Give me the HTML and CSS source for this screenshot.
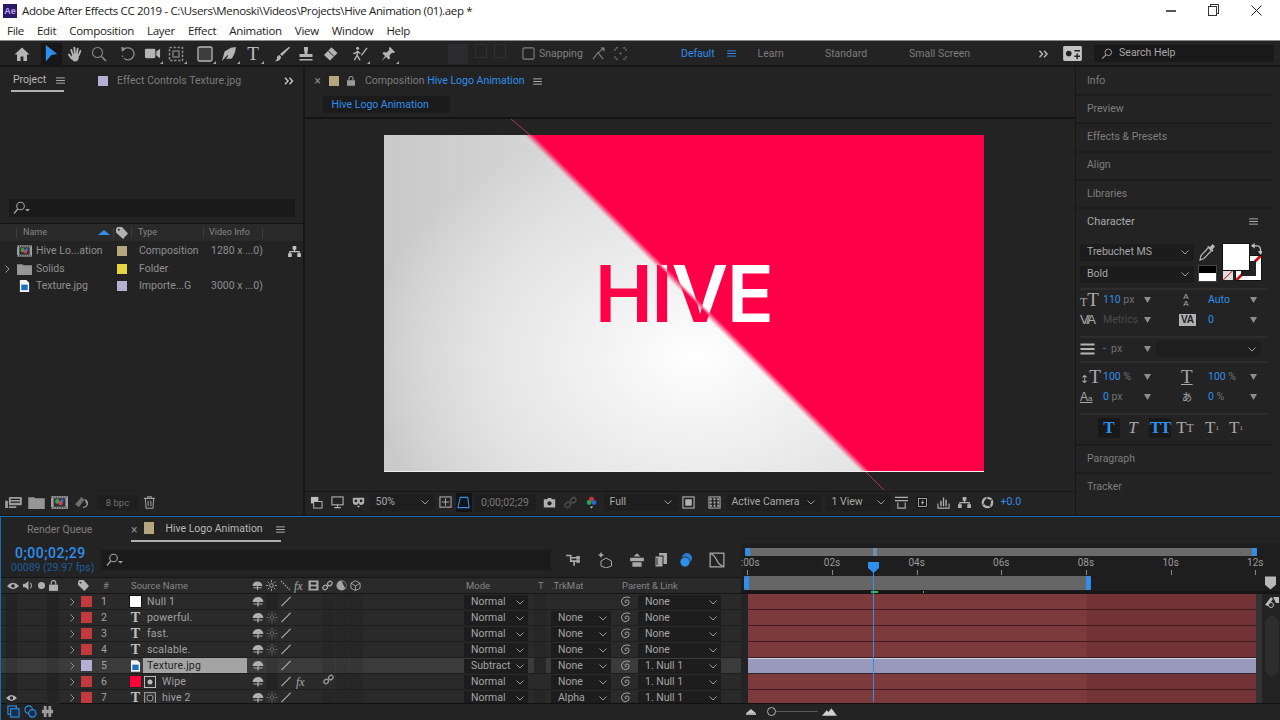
FILE: index.html
```html
<!DOCTYPE html>
<html lang="en">
<head>
<meta charset="utf-8">
<title>Adobe After Effects CC 2019</title>
<link rel="stylesheet" href="styles.css">
</head>
<body>
<svg class="sprite" aria-hidden="true">
  <symbol id="home" viewBox="0 0 16 16"><path fill="currentColor" d="M8 1.5 0.5 8.5H3V15H6.6V10.5H9.4V15H13V8.5H15.5Z"/></symbol>
  <symbol id="arrow" viewBox="0 0 16 18"><path fill="#2f8fec" d="M2 0 14 9.5 8 10.5 2 17.5Z"/></symbol>
  <symbol id="hand" viewBox="0 0 16 16"><path fill="none" stroke="currentColor" stroke-width="1.9" stroke-linecap="round" d="M4.2 4 6 9M7.3 1.8 8 8.5M10.6 2.7 9.8 8.5M13.4 5 11.6 9.5M2 8.6 4.6 12.4"/><path fill="currentColor" d="M5 8H12L11.5 13Q10.5 15.5 8 15.5 6 15.5 4.3 12.5Z"/></symbol>
  <symbol id="zoom" viewBox="0 0 16 16"><circle cx="6.5" cy="6.5" r="5" fill="none" stroke="currentColor" stroke-width="1.1"/><path stroke="currentColor" stroke-width="1.6" d="M10.5 10.5 15 15"/></symbol>
  <symbol id="rot" viewBox="0 0 16 16"><path fill="none" stroke="currentColor" stroke-width="1.3" d="M3 4.5A6 6 0 1 1 5 13"/><path fill="none" stroke="currentColor" stroke-width="1.1" stroke-dasharray="1.5 1.5" d="M5 13A6 6 0 0 1 2 8"/><path fill="currentColor" d="M1 1 6 2 2 6Z"/></symbol>
  <symbol id="cam" viewBox="0 0 18 14"><rect x="1" y="2" width="11" height="10" rx="1.5" fill="currentColor"/><path fill="currentColor" d="M13 5 17 2V12L13 9Z"/></symbol>
  <symbol id="pan" viewBox="0 0 16 16"><rect x="1.5" y="1.5" width="13" height="13" fill="none" stroke="currentColor" stroke-width="1.5" stroke-dasharray="2.4 1.6"/><rect x="5" y="5" width="6" height="6" fill="none" stroke="currentColor" stroke-width="1.2"/></symbol>
  <symbol id="rect" viewBox="0 0 16 16"><rect x="1" y="1" width="14" height="14" rx="1.5" fill="#3d3d3d" stroke="#b5b5b5" stroke-width="1.3"/></symbol>
  <symbol id="pen" viewBox="0 0 16 16"><path fill="currentColor" d="M15 1 9.8 1.8 3.6 5.5 1 15 6.500 9 7.200 9.800 5 13 11 12.500 14 6.300Z"/></symbol>
  <symbol id="brush" viewBox="0 0 16 16"><path fill="currentColor" d="M15 .7 16 1.7 8 10 6 8ZM5.2 9 7.2 11Q6.5 15 .5 15.5 3.5 13.5 3 11 3.5 9.3 5.2 9Z"/></symbol>
  <symbol id="stamp" viewBox="0 0 16 16"><path fill="currentColor" d="M6 1H10V3.5L9.3 8H14.5V11H1.5V8H6.7L6 3.5ZM1.5 13H14.5V14.5H1.5Z"/></symbol>
  <symbol id="eraser" viewBox="0 0 16 16"><path fill="currentColor" d="M9.5 1.2 15.5 7 8 14.5 2 9Z"/><path fill="#232323" d="M6 5 11.5 10.5 12 10 6.5 4.5Z"/></symbol>
  <symbol id="puppet" viewBox="0 0 18 16"><circle cx="7" cy="2.5" r="1.6" fill="currentColor"/><path fill="none" stroke="currentColor" stroke-width="1.5" d="M7 5 6.5 10 3.5 15M6.5 10 9.5 15M7 6 2.5 8.5M7 6 10 8"/><path stroke="currentColor" stroke-width="1.4" d="M17 2 11 10"/></symbol>
  <symbol id="pin" viewBox="0 0 16 16"><path fill="currentColor" d="M9.8 .8 15.2 6.2 13.5 7 12 6.8 9.5 9.5 10 12.5 8.6 13.5 2.5 7.4 3.6 6 6.5 6.5 9.2 4 9 2.5ZM5 10 6 11 1.5 15Z"/></symbol>
  <symbol id="check" viewBox="0 0 14 14"><rect x="1" y="1" width="12" height="12" rx="1.5" fill="none" stroke="currentColor" stroke-width="1.2"/></symbol>
  <symbol id="snap1" viewBox="0 0 14 14"><path fill="none" stroke="currentColor" stroke-width="1.1" d="M1 13 6.5 6 12 13M7 6 12.5 1"/><path fill="currentColor" d="M9 0.5H13.5V5Z"/></symbol>
  <symbol id="snap2" viewBox="0 0 14 14"><path fill="none" stroke="currentColor" stroke-width="1.2" stroke-dasharray="2 2" d="M1 4V1H4M10 1H13V4M13 10V13H10M4 13H1V10"/><circle cx="7" cy="7" r="1" fill="currentColor"/></symbol>
  <symbol id="ham" viewBox="0 0 10 8"><path stroke="currentColor" stroke-width="1.1" d="M0 1H10M0 4H10M0 7H10"/></symbol>
  <symbol id="more" viewBox="0 0 10 8"><path fill="none" stroke="currentColor" stroke-width="1.5" d="M1 .8 4 4 1 7.2M5.5 .8 8.5 4 5.5 7.2"/></symbol>
  <symbol id="work" viewBox="0 0 20 16"><rect width="20" height="16" rx="1.5" fill="#c4c4c4"/><circle cx="6" cy="8" r="3" fill="#222"/><path stroke="#222" stroke-width="1.5" d="M12 5H18M12 11H18M15 8V14"/></symbol>
  <symbol id="find" viewBox="0 0 14 14"><circle cx="8.5" cy="5" r="3.8" fill="none" stroke="currentColor" stroke-width="1.1"/><path stroke="currentColor" stroke-width="1.3" d="M5.7 8 1.5 12.5"/></symbol>
  <symbol id="find2" viewBox="0 0 18 14"><circle cx="7.5" cy="5" r="3.8" fill="none" stroke="currentColor" stroke-width="1.1"/><path stroke="currentColor" stroke-width="1.3" d="M4.7 8 1 12.5"/><path fill="currentColor" d="M12 8H17L14.5 10.5Z"/></symbol>
  <symbol id="sort" viewBox="0 0 12 5"><path fill="#2f8fec" d="M0 5 6 0 12 5Z"/></symbol>
  <symbol id="tag" viewBox="0 0 12 12"><path fill="#b2b2b2" d="M0 1.5 1.5 0H6L12 6.5 7 12 0 5.5Z"/><circle cx="2.8" cy="2.8" r="1" fill="#2a2a2a"/></symbol>
  <symbol id="comp" viewBox="0 0 16 12"><rect width="16" height="12" fill="#9e9e9e"/><rect x="2.5" y="2" width="11" height="8" fill="#2d2f3c"/><circle cx="6" cy="5" r="2.2" fill="#3fa34d"/><circle cx="9" cy="6.5" r="2.2" fill="#d84040"/><circle cx="10.5" cy="4.5" r="1.4" fill="#3f6fd8"/><path stroke="#222" stroke-dasharray="1 1.3" d="M0 1H16M0 11H16"/></symbol>
  <symbol id="folder" viewBox="0 0 14 11"><path fill="#969696" d="M0 1H5L6 2H14V11H0Z"/></symbol>
  <symbol id="file" viewBox="0 0 10 13"><path fill="#f2f2f2" d="M0 0H7L10 3V13H0Z"/><rect x="1.5" y="5" width="7" height="6" fill="#1f6fc4"/></symbol>
  <symbol id="flow" viewBox="0 0 14 12"><path fill="currentColor" d="M5 0H9V4H7.7V5.5H12.7V8H14V12H10V8H11.4V6.7H2.6V8H4V12H0V8H1.3V5.5H6.3V4H5Z"/></symbol>
  <symbol id="render" viewBox="0 0 18 14"><rect x="4" y="1" width="14" height="9" rx="1" fill="#9c9c9c"/><rect x="6" y="3" width="10" height="1.3" fill="#222"/><rect x="6" y="6" width="10" height="1.3" fill="#222"/><path fill="#9c9c9c" d="M0 5H3V13H0ZM4 11H12V13H4Z"/></symbol>
  <symbol id="interp" viewBox="0 0 18 14"><path fill="#6e6e6e" d="M1 9 8 1 11 4 5 12Z"/><path fill="none" stroke="#a8a8a8" stroke-width="1.2" d="M11 4A4 4 0 1 1 9.5 12"/><path stroke="#a8a8a8" stroke-width="1.2" d="M13 4V8"/></symbol>
  <symbol id="trash" viewBox="0 0 12 14"><path fill="none" stroke="currentColor" stroke-width="1.1" d="M0 2.5H12M4 2.5V.7H8V2.5M1.5 2.5 2.2 13.3H9.8L10.5 2.5M4.5 5V11M7.5 5V11"/></symbol>
  <symbol id="layers" viewBox="0 0 14 14"><rect x="1" y="1" width="8" height="7" fill="#bdbdbd"/><rect x="4" y="6" width="9" height="7" fill="#232323" stroke="#bdbdbd"/></symbol>
  <symbol id="monitor" viewBox="0 0 14 14"><rect x="1" y="1" width="12" height="8.5" fill="none" stroke="currentColor" stroke-width="1.2"/><path stroke="currentColor" stroke-width="1.2" d="M7 9.5V12M3.5 12.5H10.5"/></symbol>
  <symbol id="mask" viewBox="0 0 16 14"><path fill="currentColor" d="M1 1H15V6Q15 10 11 10 9 10 8 7.5 7 10 5 10 1 10 1 6Z"/><circle cx="4.8" cy="5" r="1.7" fill="#232323"/><circle cx="11.2" cy="5" r="1.7" fill="#232323"/><path d="M6 11H10L8 13.5Z" fill="currentColor"/></symbol>
  <symbol id="grid" viewBox="0 0 14 14"><rect x="1" y="1" width="12" height="11" fill="none" stroke="currentColor" stroke-width="1.1"/><path stroke="currentColor" d="M7 2.5V10.5M3 6.5H11"/></symbol>
  <symbol id="mbox" viewBox="0 0 14 14"><path fill="none" stroke="#2f8fec" stroke-width="1.2" d="M3.5 1.5H11.5L13 12.5H1Z"/></symbol>
  <symbol id="camera" viewBox="0 0 16 13"><path fill="currentColor" d="M1 2.5H5L6 1H10L11 2.5H15V12.5H1Z"/><circle cx="8" cy="7.5" r="2.6" fill="#232323"/></symbol>
  <symbol id="link" viewBox="0 0 14 14"><g fill="none" stroke="currentColor" stroke-width="1.6"><rect x="1" y="7" width="6" height="5" rx="2.5" transform="rotate(-45 4 9.5)"/><rect x="7" y="2" width="6" height="5" rx="2.5" transform="rotate(-45 10 4.5)"/></g></symbol>
  <symbol id="rgb" viewBox="0 0 14 16"><circle cx="7" cy="4" r="3" fill="#d8312b"/><circle cx="4" cy="8" r="3" fill="#27a54a"/><circle cx="10" cy="8" r="3" fill="#2d63d6"/><path d="M5 13H9L7 15.5Z" fill="#ccc"/></symbol>
  <symbol id="regions" viewBox="0 0 14 14"><rect x="1" y="1" width="12" height="12" fill="none" stroke="currentColor" stroke-width="1.2"/><rect x="3.5" y="3.5" width="7" height="7" fill="currentColor"/></symbol>
  <symbol id="alpha" viewBox="0 0 14 14"><rect x="1" y="1" width="12" height="12" fill="none" stroke="currentColor" stroke-width="1.1"/><path fill="none" stroke="currentColor" stroke-width="2" stroke-dasharray="2 2" d="M2 3.5H12M2 7H12M2 10.5H12"/></symbol>
  <symbol id="axis" viewBox="0 0 14 14"><path fill="none" stroke="currentColor" stroke-width="1.2" d="M0 1.5H14M0 5H14M3 7V13H11V7"/></symbol>
  <symbol id="fast" viewBox="0 0 16 16"><rect x="1" y="1" width="14" height="14" fill="#151515"/><rect x="3" y="3" width="10" height="10" fill="none" stroke="#c0c0c0"/><path fill="#c0c0c0" d="M9 4 6 9H8L7 12 10 7H8Z"/></symbol>
  <symbol id="chart" viewBox="0 0 14 14"><path fill="none" stroke="currentColor" stroke-width="1.2" d="M1 8V13H13V8"/><path fill="currentColor" d="M3.5 5H5V11H3.5ZM6.3 1.5H7.7V11H6.3ZM9 4H10.5V11H9Z"/></symbol>
  <symbol id="shutter" viewBox="0 0 14 14"><circle cx="7" cy="7" r="5" fill="none" stroke="currentColor" stroke-width="2.6"/><path stroke="#232323" d="M7 1 4 7M12 4 7 7M10 12 8 7M2 9 7 7"/></symbol>
  <symbol id="comp-mini" viewBox="0 0 14 12"><path fill="none" stroke="currentColor" stroke-width="1.4" d="M1 2H5V7H12M8 7V11M5 4H12"/><rect x="10" y="2.5" width="3" height="3" fill="currentColor"/><rect x="10" y="5.5" width="3" height="3" fill="currentColor"/></symbol>
  <symbol id="draft" viewBox="0 0 16 16"><path fill="currentColor" d="M4 0 5 2 7 3 5 4 4 6 3 4 1 3 3 2Z"/><path fill="none" stroke="currentColor" d="M9 6 14.5 9V14L9 16 4 14V9Z"/></symbol>
  <symbol id="shy2" viewBox="0 0 14 14"><path fill="currentColor" d="M7 1 10 4H4ZM1 5H13V8H1ZM3 9H11V13H3Z"/></symbol>
  <symbol id="frames" viewBox="0 0 14 16"><rect x="5" y="1" width="8" height="11" fill="currentColor"/><rect x="1" y="4" width="8" height="11" fill="currentColor" stroke="#232323"/><path stroke="#232323" d="M3 6V13"/></symbol>
  <symbol id="blur" viewBox="0 0 14 16"><ellipse cx="8" cy="6" rx="5" ry="5" transform="rotate(30 8 6)" fill="#2a7cd4"/><ellipse cx="6" cy="10" rx="5" ry="5" transform="rotate(30 6 10)" fill="#2f8fec" stroke="#232323" stroke-width=".7"/></symbol>
  <symbol id="graph" viewBox="0 0 14 14"><rect x="1" y="1" width="12" height="12" fill="none" stroke="currentColor" stroke-width="1.1"/><path fill="none" stroke="currentColor" stroke-width="1.1" d="M2 2C7 2 6 12 12 12"/></symbol>
  <symbol id="eye" viewBox="0 0 12 8"><path fill="currentColor" d="M0 4Q6-2.5 12 4 6 10.5 0 4Z"/><circle cx="6" cy="4" r="1.8" fill="#262626"/></symbol>
  <symbol id="spk" viewBox="0 0 12 12"><path fill="currentColor" d="M0 4H2.5L6 1V11L2.5 8H0Z"/><path fill="none" stroke="currentColor" stroke-width="1.1" d="M8 3Q10.5 6 8 9"/></symbol>
  <symbol id="lock" viewBox="0 0 10 12"><path fill="none" stroke="currentColor" stroke-width="1.3" d="M2.5 5V3A2.5 2.5 0 0 1 7.5 3V5"/><rect y="5" width="10" height="7" fill="currentColor"/></symbol>
  <symbol id="shy" viewBox="0 0 12 10"><path fill="currentColor" d="M6 .5Q10.500 .5 11.500 5.500H.5Q1.500 .5 6 .5ZM1.500 7H10.500V8H1.500ZM5.400 5H6.600V10H5.400Z"/></symbol>
  <symbol id="sun" viewBox="0 0 12 12"><circle cx="6" cy="6" r="2" fill="none" stroke="currentColor"/><path stroke="currentColor" d="M6 0V2.5M6 9.500V12M0 6H2.500M9.500 6H12M1.800 1.800 3.500 3.500M8.500 8.500 10.200 10.200M1.800 10.200 3.500 8.500M8.500 3.500 10.200 1.800"/></symbol>
  <symbol id="slash" viewBox="0 0 12 12"><path stroke="currentColor" stroke-width="1.2" d="M1 11 11 1"/></symbol>
  <symbol id="dash" viewBox="0 0 12 12"><path stroke="currentColor" stroke-width="1.1" stroke-dasharray="2 1" d="M1 1 11 11"/></symbol>
  <symbol id="film" viewBox="0 0 12 12"><rect x=".5" y=".5" width="11" height="11" fill="#a4a4a4"/><rect x="3" y="2.500" width="6" height="2.500" fill="#222"/><rect x="3" y="7" width="6" height="2.500" fill="#222"/></symbol>
  <symbol id="half" viewBox="0 0 12 12"><circle cx="6" cy="6" r="5.500" fill="#a4a4a4"/><path fill="#2a2a2a" d="M6 1A5 5 0 0 1 10 9Z"/></symbol>
  <symbol id="cube" viewBox="0 0 12 12"><path fill="none" stroke="currentColor" d="M6 .7 11 3.500V9L6 11.500 1 9V3.500ZM1 3.500 6 6.500 11 3.500M6 6.500V11.500"/></symbol>
  <symbol id="spiral" viewBox="0 0 12 12"><path fill="none" stroke="currentColor" stroke-width="1" d="M6.500 6.500Q5 7 5 5.500 5.500 3.500 8 4 10 5.500 8.500 8.500 5 11 2.500 8.500 0 5 3 2.200 6 0 10 1.500"/></symbol>
  <symbol id="chev" viewBox="0 0 8 5"><path fill="none" stroke="currentColor" stroke-width="1" d="M.5 .5 4 4 7.500 .5"/></symbol>
  <symbol id="chevr" viewBox="0 0 5 8"><path fill="none" stroke="currentColor" stroke-width="1" d="M.5 .5 4 4 .5 7.500"/></symbol>
  <symbol id="caret" viewBox="0 0 7 6"><path fill="currentColor" d="M0 0H7L3.500 6Z"/></symbol>
  <symbol id="drop" viewBox="0 0 16 18"><path fill="none" stroke="#b4b4b4" stroke-width="1.2" d="M9 5 2 12.500 1 17 5 15.500 12 8"/><path fill="#b4b4b4" d="M8 4 10 6 13 9 14.500 7.500 13.500 6.500 16 3.500 13.500 1 11 4 9.500 3Z"/></symbol>
  <symbol id="swapi" viewBox="0 0 12 14"><path fill="none" stroke="#c4c4c4" stroke-width="1.400" d="M1 3H7Q10.500 3 10.500 9"/><path fill="#c4c4c4" d="M4 0V6L0 3ZM7.500 8.500H13L10.500 13Z"/></symbol>
  <symbol id="lines" viewBox="0 0 14 12"><path stroke="#b4b4b4" stroke-width="2" d="M0 1.500H14M0 6H14M0 10.500H14"/></symbol>
  <symbol id="slider-m" viewBox="0 0 16 8"><path fill="#d0d0d0" d="M0 8 5 2 7 4 10 0 16 8Z"/></symbol>
  <symbol id="slider-s" viewBox="0 0 12 8"><path fill="#c4c4c4" d="M0 6 6 1 12 6Z"/><rect y="6" width="12" height="2" fill="#c4c4c4"/></symbol>
  <symbol id="t1" viewBox="0 0 14 14"><rect x="1" y="1" width="9" height="9" fill="none" stroke="#2f8fec" stroke-width="1.200"/><rect x="4" y="4" width="9" height="9" fill="#14304a" stroke="#2f8fec" stroke-width="1.200"/></symbol>
  <symbol id="t2" viewBox="0 0 14 14"><circle cx="5" cy="5" r="4" fill="none" stroke="#2f8fec" stroke-width="1.200"/><circle cx="9" cy="9" r="4" fill="#14304a" stroke="#2f8fec" stroke-width="1.200"/></symbol>
  <symbol id="t3" viewBox="0 0 14 14"><path fill="#9c9c9c" d="M3 1H6V5H3ZM8 1H11V5H8ZM3 9H6V13H3ZM8 9H11V13H8ZM1 5H13V9H1Z"/></symbol>
  <symbol id="cap" viewBox="0 0 12 14"><path fill="#b9b9b9" d="M0 0H12V9L6 14 0 9Z"/></symbol>
  <symbol id="pens" viewBox="0 0 14 12"><path fill="#bcbcbc" d="M8 1H14V7H11ZM0 9 6 1 8 3 3 10Z"/><circle cx="6" cy="9" r="2.500" fill="#232323" stroke="#bcbcbc"/></symbol>
  <symbol id="wipe-mask" viewBox="0 0 12 12"><rect x=".5" y=".5" width="11" height="11" fill="none" stroke="#bbb"/><circle cx="6" cy="6" r="2.500" fill="#bbb"/></symbol>
  <symbol id="track-mask" viewBox="0 0 12 12"><rect x=".5" y=".5" width="11" height="11" fill="#3a3a3a" stroke="#999"/><circle cx="6" cy="6" r="3" fill="#232323" stroke="#999"/></symbol>
</svg>

<header class="titlebar">
  <span class="ae-logo">Ae</span>
  <span class="title-text">Adobe After Effects CC 2019 - C:\Users\Menoski\Videos\Projects\Hive Animation (01).aep *</span>
  <div class="winbtns">
    <span class="win-min"></span>
    <span class="win-max"></span>
    <svg class="win-close" viewBox="0 0 11 11"><path stroke="#222" d="M.5 .5 10.500 10.500M10.500 .5 .5 10.500"/></svg>
  </div>
</header>
<nav class="menubar">
  <span>File</span><span>Edit</span><span>Composition</span><span>Layer</span><span>Effect</span><span>Animation</span><span>View</span><span>Window</span><span>Help</span>
</nav>

<div class="toolbar">
  <div class="tgroup"><span class="ti"><svg class="i16"><use href="#home"/></svg></span></div>
  <div class="tgroup">
    <span class="ti ti-on"><svg class="i17"><use href="#arrow"/></svg></span>
    <span class="ti"><svg class="i16"><use href="#hand"/></svg></span>
    <span class="ti dim"><svg class="i16"><use href="#zoom"/></svg></span>
  </div>
  <div class="tgroup">
    <span class="ti dim"><svg class="i16"><use href="#rot"/></svg></span>
    <span class="ti tri"><svg class="i17"><use href="#cam"/></svg></span>
    <span class="ti dim tri"><svg class="i16"><use href="#pan"/></svg></span>
  </div>
  <div class="tgroup">
    <span class="ti tri"><svg class="i16"><use href="#rect"/></svg></span>
    <span class="ti tri"><svg class="i16"><use href="#pen"/></svg></span>
    <span class="ti t-glyph tri">T</span>
  </div>
  <div class="tgroup">
    <span class="ti"><svg class="i16"><use href="#brush"/></svg></span>
    <span class="ti"><svg class="i16"><use href="#stamp"/></svg></span>
    <span class="ti"><svg class="i16"><use href="#eraser"/></svg></span>
  </div>
  <div class="tgroup"><span class="ti tri"><svg class="i17"><use href="#puppet"/></svg></span></div>
  <div class="tgroup"><span class="ti tri"><svg class="i16"><use href="#pin"/></svg></span></div>
  <div class="axis-btns">
    <span class="axis-on"></span><span class="axis-off"></span><span class="axis-off"></span>
  </div>
  <div class="snap">
    <svg class="i13"><use href="#check"/></svg><span>Snapping</span>
    <svg class="i13 snap-i1"><use href="#snap1"/></svg>
    <svg class="i13 snap-i2"><use href="#snap2"/></svg>
  </div>
  <div class="workspaces">
    <span class="blue">Default</span><svg class="ws-ham"><use href="#ham"/></svg>
    <span class="ws-learn">Learn</span><span class="ws-std">Standard</span><span class="ws-small">Small Screen</span>
  </div>
  <svg class="ws-more"><use href="#more"/></svg>
  <svg class="ws-work"><use href="#work"/></svg>
  <div class="helpbox"><svg class="i12"><use href="#find"/></svg><span>Search Help</span></div>
</div>

<main class="main">
  <section class="panel project">
    <div class="tabs">
      <div class="tab-on"><span class="lit">Project</span><svg class="ham"><use href="#ham"/></svg></div>
      <span class="swatch sw-lav tab-sw"></span>
      <span class="tab-dim">Effect Controls&nbsp;Texture.jpg</span>
      <svg class="tab-more"><use href="#more"/></svg>
    </div>
    <div class="proj-search"><svg class="i16f"><use href="#find2"/></svg></div>
    <div class="proj-head">
      <span class="ph-name">Name<svg class="sort"><use href="#sort"/></svg></span>
      <span class="ph-tag"><svg class="i12"><use href="#tag"/></svg></span>
      <span class="ph-type">Type</span>
      <span class="ph-info">Video Info</span>
    </div>
    <div class="proj-row">
      <span class="pr-arrow"></span><span class="pr-icon"><svg class="pi"><use href="#comp"/></svg></span><span class="pr-name">Hive Lo...ation</span>
      <span class="swatch sw-tan"></span><span class="pr-type">Composition</span><span class="pr-info">1280 x ...0)</span>
      <svg class="pr-flow"><use href="#flow"/></svg>
    </div>
    <div class="proj-row">
      <span class="pr-arrow"><svg class="cr8"><use href="#chevr"/></svg></span><span class="pr-icon"><svg class="pi"><use href="#folder"/></svg></span><span class="pr-name">Solids</span>
      <span class="swatch sw-yel"></span><span class="pr-type">Folder</span>
    </div>
    <div class="proj-row">
      <span class="pr-arrow"></span><span class="pr-icon"><svg class="pi"><use href="#file"/></svg></span><span class="pr-name">Texture.jpg</span>
      <span class="swatch sw-lav"></span><span class="pr-type">Importe...G</span><span class="pr-info">3000 x ...0)</span>
    </div>
    <div class="proj-foot">
      <svg class="pf-i"><use href="#render"/></svg>
      <svg class="pf-i"><use href="#folder"/></svg>
      <svg class="pf-i"><use href="#comp"/></svg>
      <svg class="pf-i"><use href="#interp"/></svg>
      <span class="bpc">8 bpc</span>
      <svg class="pf-t"><use href="#trash"/></svg>
    </div>
  </section>

  <section class="panel viewer-panel">
    <div class="tabs comp-tabs">
      <span class="x">×</span>
      <span class="swatch sw-tan"></span>
      <svg class="lock-i"><use href="#lock"/></svg>
      <span class="tab-dim">Composition <span class="blue">Hive Logo Animation</span></span>
      <svg class="ham"><use href="#ham"/></svg>
    </div>
    <div class="subtab"><span class="subtab-pill blue">Hive Logo Animation</span></div>
    <div class="viewer">
      <div class="frame"><span class="hive">HIVE</span></div>
      <svg class="wipe-lines" viewBox="0 0 769 372"><path stroke="#b03a4c" d="M206 0 225 16M561 353 579 371"/></svg>
    </div>
    <div class="viewctl">
      <svg class="vi"><use href="#layers"/></svg>
      <svg class="vi"><use href="#monitor"/></svg>
      <svg class="vi"><use href="#mask"/></svg>
      <span class="vdrop v-zoom">50%<svg class="chev"><use href="#chev"/></svg></span>
      <svg class="vi"><use href="#grid"/></svg>
      <span class="mbox"><svg class="i13"><use href="#mbox"/></svg></span>
      <span class="vtime">0;00;02;29</span>
      <svg class="vi cam"><use href="#camera"/></svg>
      <svg class="vi ghost"><use href="#link"/></svg>
      <svg class="vi"><use href="#rgb"/></svg>
      <span class="vdrop v-full">Full<svg class="chev"><use href="#chev"/></svg></span>
      <svg class="vi"><use href="#regions"/></svg>
      <svg class="vi a12"><use href="#alpha"/></svg>
      <span class="vdrop v-cam">Active Camera<svg class="chev"><use href="#chev"/></svg></span>
      <span class="vdrop v-view">1 View<svg class="chev"><use href="#chev"/></svg></span>
      <svg class="vi v-g"><use href="#axis"/></svg>
      <svg class="vi v-g"><use href="#fast"/></svg>
      <svg class="vi v-g"><use href="#chart"/></svg>
      <svg class="vi v-g"><use href="#flow"/></svg>
      <svg class="vi v-s"><use href="#shutter"/></svg>
      <span class="blue v-exp">+0.0</span>
    </div>
  </section>

  <aside class="panel right">
    <div class="rp">Info</div>
    <div class="rp">Preview</div>
    <div class="rp">Effects &amp; Presets</div>
    <div class="rp">Align</div>
    <div class="rp">Libraries</div>
    <div class="char">
      <div class="char-head"><span>Character</span><svg class="ham"><use href="#ham"/></svg></div>
      <div class="fontbox">
        <div class="font-drops">
          <span class="fdrop">Trebuchet MS<svg class="chev"><use href="#chev"/></svg></span>
          <span class="fdrop">Bold<svg class="chev"><use href="#chev"/></svg></span>
        </div>
        <div class="colors">
          <svg class="dropper"><use href="#drop"/></svg>
          <span class="mini-bw"></span>
          <span class="none-sw"></span>
          <span class="stroke-sw"><span class="stroke-in"></span></span>
          <span class="fill-sw"></span>
          <svg class="swap"><use href="#swapi"/></svg>
        </div>
      </div>
      <div class="cgroup cg1">
        <div class="crow"><span class="ci ci-t"><small>T</small>T</span><span class="cv"><b>110</b> px</span><svg class="car"><use href="#caret"/></svg><i></i><span class="ci ci-a">A<br>A</span><span class="cv"><b>Auto</b></span><svg class="car"><use href="#caret"/></svg></div>
        <div class="crow"><span class="ci ci-va">V/A</span><span class="cv faint">Metrics</span><svg class="car"><use href="#caret"/></svg><i></i><span class="ci ci-vb">VA</span><span class="cv"><b>0</b></span><svg class="car"><use href="#caret"/></svg></div>
      </div>
      <div class="cgroup stroke-row">
        <svg class="lines"><use href="#lines"/></svg><span class="cv"><b>-</b> &nbsp;px</span><svg class="car"><use href="#caret"/></svg>
        <span class="stroke-drop"><svg class="chev"><use href="#chev"/></svg></span>
      </div>
      <div class="cgroup cg3">
        <div class="crow"><span class="ci ci-h"><small>↕</small>T</span><span class="cv"><b>100</b> %</span><svg class="car"><use href="#caret"/></svg><i></i><span class="ci ci-w">T</span><span class="cv"><b>100</b> %</span><svg class="car"><use href="#caret"/></svg></div>
        <div class="crow"><span class="ci ci-b">A<small>a</small></span><span class="cv"><b>0</b> px</span><svg class="car"><use href="#caret"/></svg><i></i><span class="ci ci-j">あ</span><span class="cv"><b>0</b> %</span><svg class="car"><use href="#caret"/></svg></div>
      </div>
      <div class="styles">
        <span class="st st-on st-b">T</span><span class="st st-i">T</span><span class="st st-on st-tt">TT</span><span class="st st-sc">T<small>T</small></span><span class="st st-sup">T<sup>1</sup></span><span class="st">T<sub>1</sub></span>
      </div>
    </div>
    <div class="rp rp-top">Paragraph</div>
    <div class="rp rp-last">Tracker</div>
  </aside>
</main>

<section class="timeline">
  <div class="tl-tabs">
    <span class="rq">Render Queue</span>
    <div class="tl-tab">
      <span class="x">×</span><span class="swatch sw-tan tl-sw"></span><span class="lit tl-name">Hive Logo Animation</span><svg class="ham"><use href="#ham"/></svg>
    </div>
  </div>
  <div class="tl-body">
    <div class="tl-left">
      <div class="tl-ctrl">
        <div class="time"><span class="tc">0;00;02;29</span><span class="fps">00089 (29.97 fps)</span></div>
        <div class="tl-search"><svg class="i16f"><use href="#find2"/></svg></div>
        <div class="tl-tools">
          <svg class="tt t573"><use href="#comp-mini"/></svg>
          <svg class="tt t605"><use href="#draft"/></svg>
          <svg class="tt t637"><use href="#shy2"/></svg>
          <svg class="tt t661"><use href="#frames"/></svg>
          <svg class="tt t686"><use href="#blur"/></svg>
          <svg class="tt t717"><use href="#graph"/></svg>
        </div>
      </div>
      <div class="lhead">
        <span class="lh-sw"><svg class="e"><use href="#eye"/></svg><svg class="e11"><use href="#spk"/></svg><span class="dot"></span><svg class="e10"><use href="#lock"/></svg></span>
        <span class="lh-tag"><svg class="i11"><use href="#tag"/></svg></span>
        <span class="lh-num">#</span>
        <span class="lh-name">Source Name</span>
        <span class="lh-ic">
          <svg class="e11"><use href="#shy"/></svg><svg class="e11"><use href="#sun"/></svg><svg class="e11"><use href="#dash"/></svg><em>fx</em><svg class="e11"><use href="#film"/></svg><svg class="e11"><use href="#link"/></svg><svg class="e11"><use href="#half"/></svg><svg class="e11"><use href="#cube"/></svg>
        </span>
        <span class="lh-mode">Mode</span><span class="lh-t">T</span><span class="lh-trk">.TrkMat</span><span class="lh-par">Parent &amp; Link</span>
      </div>

      <div class="layer">
        <span class="av"><u></u><u class="gap"></u></span><svg class="exp"><use href="#chevr"/></svg><span class="lab lab-red"></span><span class="num">1</span><span class="lic"><span class="null-ic"></span></span><span class="nm">Null 1</span>
        <span class="sws"><svg class="s"><use href="#shy"/></svg><u></u><svg class="s"><use href="#slash"/></svg><span class="fx"></span></span><span class="cells"><u></u><u></u><u></u></span>
        <span class="dd mode">Normal<svg class="chev"><use href="#chev"/></svg></span><u class="tc-cell"></u><span class="trk-empty"></span><svg class="sp"><use href="#spiral"/></svg><span class="dd par">None<svg class="chev"><use href="#chev"/></svg></span>
      </div>
      <div class="layer">
        <span class="av"><u></u><u class="gap"></u></span><svg class="exp"><use href="#chevr"/></svg><span class="lab lab-red"></span><span class="num">2</span><span class="lic t-lic">T</span><span class="nm">powerful.</span>
        <span class="sws"><svg class="s"><use href="#shy"/></svg><svg class="s sun"><use href="#sun"/></svg><svg class="s"><use href="#slash"/></svg><span class="fx"></span></span><span class="cells"><u></u><u></u><u></u></span>
        <span class="dd mode">Normal<svg class="chev"><use href="#chev"/></svg></span><u class="tc-cell"></u><span class="dd trk">None<svg class="chev"><use href="#chev"/></svg></span><svg class="sp"><use href="#spiral"/></svg><span class="dd par">None<svg class="chev"><use href="#chev"/></svg></span>
      </div>
      <div class="layer">
        <span class="av"><u></u><u class="gap"></u></span><svg class="exp"><use href="#chevr"/></svg><span class="lab lab-red"></span><span class="num">3</span><span class="lic t-lic">T</span><span class="nm">fast.</span>
        <span class="sws"><svg class="s"><use href="#shy"/></svg><svg class="s sun"><use href="#sun"/></svg><svg class="s"><use href="#slash"/></svg><span class="fx"></span></span><span class="cells"><u></u><u></u><u></u></span>
        <span class="dd mode">Normal<svg class="chev"><use href="#chev"/></svg></span><u class="tc-cell"></u><span class="dd trk">None<svg class="chev"><use href="#chev"/></svg></span><svg class="sp"><use href="#spiral"/></svg><span class="dd par">None<svg class="chev"><use href="#chev"/></svg></span>
      </div>
      <div class="layer">
        <span class="av"><u></u><u class="gap"></u></span><svg class="exp"><use href="#chevr"/></svg><span class="lab lab-red"></span><span class="num">4</span><span class="lic t-lic">T</span><span class="nm">scalable.</span>
        <span class="sws"><svg class="s"><use href="#shy"/></svg><svg class="s sun"><use href="#sun"/></svg><svg class="s"><use href="#slash"/></svg><span class="fx"></span></span><span class="cells"><u></u><u></u><u></u></span>
        <span class="dd mode">Normal<svg class="chev"><use href="#chev"/></svg></span><u class="tc-cell"></u><span class="dd trk">None<svg class="chev"><use href="#chev"/></svg></span><svg class="sp"><use href="#spiral"/></svg><span class="dd par">None<svg class="chev"><use href="#chev"/></svg></span>
      </div>
      <div class="layer sel">
        <span class="av"><u></u><u class="gap"></u></span><svg class="exp"><use href="#chevr"/></svg><span class="lab lab-lav"></span><span class="num">5</span><span class="lic"><svg class="file-ic"><use href="#file"/></svg></span><span class="nm nm-sel">Texture.jpg</span>
        <span class="sws"><svg class="s"><use href="#shy"/></svg><u></u><svg class="s"><use href="#slash"/></svg><span class="fx"></span></span><span class="cells"><u></u><u></u><u></u></span>
        <span class="dd mode">Subtract<svg class="chev"><use href="#chev"/></svg></span><u class="tc-cell"></u><span class="dd trk">None<svg class="chev"><use href="#chev"/></svg></span><svg class="sp"><use href="#spiral"/></svg><span class="dd par">1. Null 1<svg class="chev"><use href="#chev"/></svg></span>
      </div>
      <div class="layer">
        <span class="av"><u></u><u class="gap"></u></span><svg class="exp"><use href="#chevr"/></svg><span class="lab lab-red"></span><span class="num">6</span><span class="lic"><span class="solid-ic"></span></span><span class="nm nm-mask"><svg class="mask-i"><use href="#wipe-mask"/></svg>Wipe</span>
        <span class="sws"><svg class="s"><use href="#shy"/></svg><u></u><svg class="s"><use href="#slash"/></svg><span class="fx">fx</span></span><span class="cells cells-m"><svg class="s"><use href="#link"/></svg><u></u><u></u></span>
        <span class="dd mode">Normal<svg class="chev"><use href="#chev"/></svg></span><u class="tc-cell none"></u><span class="dd trk">None<svg class="chev"><use href="#chev"/></svg></span><svg class="sp"><use href="#spiral"/></svg><span class="dd par">1. Null 1<svg class="chev"><use href="#chev"/></svg></span>
      </div>
      <div class="layer">
        <span class="av av-eye"><svg class="eye-i"><use href="#eye"/></svg><u></u><u class="gap"></u></span><svg class="exp"><use href="#chevr"/></svg><span class="lab lab-red"></span><span class="num">7</span><span class="lic t-lic">T</span><span class="nm nm-mask"><svg class="mask-i"><use href="#track-mask"/></svg>hive 2</span>
        <span class="sws"><svg class="s"><use href="#shy"/></svg><svg class="s sun"><use href="#sun"/></svg><svg class="s"><use href="#slash"/></svg><span class="fx"></span></span><span class="cells"><u></u><u></u><u></u></span>
        <span class="dd mode">Normal<svg class="chev"><use href="#chev"/></svg></span><u class="tc-cell"></u><span class="dd trk">Alpha<svg class="chev"><use href="#chev"/></svg></span><svg class="sp"><use href="#spiral"/></svg><span class="dd par">1. Null 1<svg class="chev"><use href="#chev"/></svg></span>
      </div>
    </div>

    <div class="tl-right">
      <div class="navbar"><span class="cap-l"></span><span class="nav-cti"></span><span class="cap-r"></span></div>
      <div class="ruler">
        <div class="ruler-in">
          <span class="rt">0:00s</span><span class="rt">02s</span><span class="rt">04s</span><span class="rt">06s</span><span class="rt">08s</span><span class="rt">10s</span><span class="rt">12s</span>
        </div>
      </div>
      <div class="workrow"><div class="workbar"><span class="cap-l"></span><span class="cap-r"></span></div><svg class="caprt"><use href="#cap"/></svg></div>
      <div class="greenrow"><span class="g1"></span><span class="g2"></span></div>
      <div class="tracks">
        <div class="track-col">
          <div class="bar"></div><div class="bar"></div><div class="bar"></div><div class="bar"></div><div class="bar bar-lav"></div><div class="bar"></div><div class="bar"></div>
        </div>
        <div class="tl-scroll"><svg class="pens"><use href="#pens"/></svg><span class="thumb"></span></div>
      </div>
      <div class="cti"><span class="cti-head"></span></div>
    </div>
  </div>
  <div class="tl-foot">
    <div class="foot-l"><svg class="i13"><use href="#t1"/></svg><svg class="i13"><use href="#t2"/></svg><svg class="i13"><use href="#t3"/></svg></div>
    <div class="foot-r"><svg class="sm"><use href="#slider-s"/></svg><span class="zoomknob"></span><span class="zoomline"></span><svg class="sl"><use href="#slider-m"/></svg></div>
  </div>
</section>
</body>
</html>
```
FILE: styles.css
```css
* { box-sizing: border-box; }
html, body { margin: 0; height: 100%; }
body {
  width: 1280px; height: 720px; overflow: hidden;
  background: #161616; color: #9a9a9a;
  font: 10.5px/1 Roboto, "Liberation Sans", sans-serif;
  display: flex; flex-direction: column;
}
svg { display: block; flex: none; }
.sprite { position: absolute; width: 0; height: 0; }
.blue { color: #2f8fec; }
.lit { color: #b8b8b8; }
.dim { color: #8c8c8c; }
.i12 { width: 12px; height: 12px; }
.i13 { width: 13px; height: 13px; }
.i11 { width: 11px; height: 11px; }
.i16 { width: 16px; height: 16px; }
.i17 { width: 17px; height: 17px; }
.i16f { width: 18px; height: 14px; color: #a0a0a0; }
.ham { width: 9px; height: 7px; color: #b0b0b0; }
.chev { width: 8px; height: 5px; color: #9a9a9a; }
.swatch { width: 10px; height: 10px; flex: none; }
.sw-lav { background: #b4b0d4; }
.sw-tan { background: #b5a77e; }
.sw-yel { background: #e6d53e; }

/* title + menu */
.titlebar { height: 21px; flex: none; background: #fff; display: flex; align-items: center; color: #222; font: 11.5px/1 "Open Sans", sans-serif; }
.ae-logo { width: 14px; height: 14px; margin-left: 3px; background: #2a1a63; color: #c3a4ff; font: 700 9px/14px "Liberation Sans", sans-serif; text-align: center; }
.title-text { margin-left: 5px; letter-spacing: -.36px; white-space: nowrap; }
.winbtns { margin-left: auto; display: flex; align-items: center; gap: 32px; padding-right: 18px; height: 20px; }
.win-min { width: 10px; height: 2px; background: #555; }
.win-max { width: 9px; height: 10px; margin-right: 2px; border: 1px solid #333; box-shadow: 2px -2px 0 -1px #fff, 2px -2px 0 0 #333; }
.win-close { width: 11px; height: 11px; }
.menubar { height: 19px; flex: none; background: #fff; display: flex; gap: 13px; padding-left: 7px; align-items: center; color: #222; font: 11.5px/1 "Open Sans", sans-serif; letter-spacing: -.3px; }

/* toolbar */
.toolbar { height: 25px; flex: none; background: #232323; border-top: 1px solid #8a8a8a; display: flex; align-items: center; padding: 1px 0 0 10px; color: #b4b4b4; }
.tgroup { display: flex; margin-right: 5px; }
.ti { width: 24px; height: 22px; display: flex; align-items: center; justify-content: center; position: relative; }
.ti.tri::after { content: ""; position: absolute; right: 1px; bottom: 1px; border-style: solid; border-width: 0 0 3px 3px; border-color: transparent transparent #a8a8a8 transparent; }
.ti-on { background: #171717; width: 21px; margin: 0 1.500px; }
.t-glyph { font: 19px/1 "Liberation Serif", serif; color: #c0c0c0; }
.axis-btns { display: flex; gap: 7px; margin-left: 43px; }
.axis-on { width: 20px; height: 20px; background: #2b2b30; }
.axis-off { width: 12px; height: 14px; border: 1px solid #2f2f2f; }
.snap { display: flex; align-items: center; margin-left: 16px; color: #808080; }
.snap span { margin-left: 4px; width: 41px; white-space: nowrap; padding-top: 1px; }
.snap-i1 { margin-left: 12px; }
.snap-i2 { margin-left: 9px; }
.workspaces { display: flex; align-items: center; margin-left: 54px; color: #7c7c7c; }
.workspaces span { white-space: nowrap; padding-top: 1px; }
.ws-ham { width: 9px; height: 7px; color: #2f8fec; margin-left: 12px; }
.ws-learn { margin-left: 22px; }
.ws-std { margin-left: 41px; }
.ws-small { margin-left: 42px; }
.ws-more { width: 11px; height: 8px; margin-left: 68px; color: #b4b4b4; }
.ws-work { width: 19px; height: 15px; margin-left: 14px; }
.helpbox { width: 180px; height: 17px; background: #191919; margin-left: 12px; display: flex; align-items: center; padding-left: 7px; color: #a8a8a8; gap: 6px; }

/* main */
.main { height: 450px; flex: none; display: grid; grid-template-columns: 303px 770px 204px; column-gap: 1.500px; padding-top: 2px; background: #161616; }
.panel { background: #232323; display: flex; flex-direction: column; min-width: 0; }
.tabs { height: 25px; flex: none; display: flex; align-items: center; color: #7c7c7c; padding-top: 3px; }
.project .tabs { padding-left: 13px; }
.tab-on { display: flex; align-items: center; gap: 10px; height: 22px; border-bottom: 2px solid #b0b0b0; width: 53px; margin-left: -2px; padding-left: 2px; }
.tab-sw { margin-left: 34px; }
.tab-dim { margin-left: 9px; white-space: nowrap; }
.tab-more { width: 10px; height: 8px; margin-left: 43px; color: #c0c0c0; }
.proj-search { margin: 107px 8px 0 9px; height: 18px; background: #1a1a1a; padding: 2px 0 0 4px; flex: none; }
.proj-head { margin: 6px 0 1.500px; height: 18px; flex: none; background: #2a2a2a; border-top: 1px solid #141414; display: grid; grid-template-columns: 97px 18px 72px 1fr; padding-left: 16px; align-items: center; color: #868686; font-size: 9px; }
.proj-head > span { border-left: 1px solid #3d3d3d; height: 10px; padding-left: 6px; display: flex; align-items: center; }
.ph-tag { padding-left: 2px !important; }
.ph-name { justify-content: space-between; padding-right: 3px; }
.ph-info { border-right: 1px solid #3d3d3d; width: 60px; padding-left: 5px !important; white-space: nowrap; }
.sort { width: 12px; height: 5px; }
.proj-row { height: 17.500px; flex: none; display: flex; align-items: center; color: #8f8f8f; }
.pr-arrow { width: 17px; padding-left: 5px; }
.cr8 { width: 5px; height: 8px; color: #999; }
.pr-icon { width: 19px; display: flex; justify-content: flex-start; }
.pi { width: 15px; height: 12px; }
.pr-name { width: 81px; white-space: nowrap; }
.pr-type { margin-left: 12px; width: 72px; white-space: nowrap; }
.pr-info { white-space: nowrap; }
.pr-flow { width: 13px; height: 11px; margin-left: 25px; color: #c0c0c0; }
.proj-foot { margin-top: auto; height: 23px; padding-bottom: 3px; flex: none; display: flex; align-items: center; padding-left: 5px; gap: 6px; }
.pf-i { width: 17px; height: 13px; color: #9c9c9c; }
.bpc { width: 41px; height: 15px; background: #1e1e1e; color: #707070; text-align: center; line-height: 15px; font-size: 9.500px; }
.pf-t { width: 11px; height: 13px; color: #a0a0a0; }

.comp-tabs { padding-left: 10px; }
.x { color: #8a8a8a; font-size: 12px; }
.comp-tabs .swatch { margin-left: 8px; }
.lock-i { width: 8px; height: 10px; margin-left: 8px; color: #999; }
.comp-tabs .tab-dim { margin-left: 10px; }
.comp-tabs .ham { margin-left: 9px; }
.subtab { height: 27px; flex: none; padding: 4px 0 0 18px; border-bottom: 2px solid #141414; }
.subtab-pill { display: block; width: 127px; height: 17px; background: #1b1b1b; line-height: 17px; padding-left: 9px; }
.viewer { height: 372px; flex: none; position: relative; display: flex; padding: 16px 0 0 79px; overflow: hidden; }
.frame {
  width: 600px; height: 337px; display: flex; align-items: center; justify-content: center;
  background:
    linear-gradient(45deg, transparent 50.900%, #ff0048 51.900%),
    radial-gradient(ellipse 330px 240px at 52% 66%, #fff 0%, #f4f4f4 25%, #e6e6e6 60%, rgba(228,228,228,0) 100%),
    linear-gradient(90deg, #c9c9c9, #dedede 45%, #dcdcdc);
  border-bottom: 1px solid #efefef;
}
.hive {
  display: block; width: 190px; height: 80px; text-align: center; white-space: nowrap;
  margin-top: -18px;
  font: 600 78px/80px Inter, "Liberation Sans", sans-serif; letter-spacing: -1.500px;
  background: linear-gradient(45deg, #ff0048 0, #ff0048 51%, #fff 53%, #fff 100%);
  -webkit-background-clip: text; background-clip: text; color: transparent;
}
.wipe-lines { position: absolute; left: 0; top: 0; width: 769px; height: 372px; pointer-events: none; }
.viewctl { flex: 1; display: flex; align-items: center; padding: 0 0 3px 1px; color: #a8a8a8; border-top: 1px solid #161616; }
.vi { width: 13px; height: 13px; margin: 0 4px; color: #b0b0b0; }
.vdrop { display: flex; align-items: center; justify-content: space-between; height: 17px; background: #1e1e1e; padding: 0 6px; white-space: nowrap; color: #a8a8a8; }
.v-zoom { width: 65px; margin-left: 1px; }
.mbox { width: 16px; height: 19px; background: #141414; display: flex; align-items: center; justify-content: center; }
.vtime { width: 61px; height: 17px; margin-left: 3px; background: #1e1e1e; line-height: 17px; text-align: center; color: #787878; }
.cam { margin-left: 7px; }
.ghost { color: #4c4c4c; margin-left: 4px; }
.v-full { width: 74px; margin-left: 2px; }
.a12 { margin-left: 9px; }
.v-cam { width: 95px; margin-left: 1px; }
.v-view { width: 65px; margin-left: 5px; }
.v-g { margin: 0 4px; }
.v-s { margin-left: 6px; }
.v-exp { margin-left: 3px; }

/* right */
.rp { height: 28.200px; flex: none; padding-left: 11px; display: flex; align-items: center; color: #7e7e7e; border-bottom: 2px solid #1c1c1c; margin-right: 8px; }
.right .rp:first-child { margin-top: 1px; }
.rp-top { border-top: 2px solid #1c1c1c; height: 28px; border-bottom: 0; }
.rp-last { border-top: 2px solid #1c1c1c; border-bottom: 0; height: 28px; }
.char { flex: none; height: 235px; padding: 0 12px 0 4px; }
.char-head { height: 25px; display: flex; align-items: center; justify-content: space-between; padding: 0 0 0 7px; color: #a8a8a8; font-size: 11px; margin-right: 10px; }
.fontbox { display: flex; margin-top: 10px; height: 46px; border-bottom: 2px solid #2d2d2d; }
.font-drops { width: 114px; display: flex; flex-direction: column; gap: 5px; }
.fdrop { height: 17px; background: #1c1c1c; display: flex; justify-content: space-between; align-items: center; padding: 0 5px 0 7px; color: #a6a6a6; }
.colors { position: relative; flex: 1; top: -1px; }
.dropper { position: absolute; left: 5px; top: 0; width: 16px; height: 18px; }
.mini-bw { position: absolute; left: 4px; top: 22px; width: 19px; height: 17px; background: linear-gradient(#000 50%, #fff 50%); border: 1px solid #444; }
.none-sw { position: absolute; left: 29px; top: 27px; width: 10px; height: 10px; background: linear-gradient(135deg, #ddd 46%, #e04040 48%, #e04040 54%, #ddd 56%); }
.stroke-sw { position: absolute; left: 41px; top: 12px; width: 27px; height: 26px; background: linear-gradient(135deg, #fff 0 46%, #e01010 47%, #e01010 53%, #fff 54%); border: 1px solid #111; padding: 5px; }
.stroke-in { display: block; width: 15px; height: 15px; background: #232323; }
.fill-sw { position: absolute; left: 28px; top: 0; width: 28px; height: 28px; background: #fff; border: 1px solid #111; }
.swap { position: absolute; left: 57px; top: 0; width: 11px; height: 13px; }
.cgroup { border-bottom: 2px solid #2d2d2d; }
.cg1 { padding-bottom: 6px; }
.cg3 { padding: 4px 0 6px; }
.crow { display: grid; grid-template-columns: 23px 41px 8px 27px 29px 42px 8px; height: 20px; align-items: center; color: #666; }
.crow i { display: block; }
.ci { color: #aaa; font-family: "Liberation Serif", serif; font-size: 19px; line-height: 1; white-space: nowrap; }
.ci small { font-size: 12px; }
.ci-a { font: 8px/7px "Liberation Sans", sans-serif; text-align: center; width: 14px; }
.ci-va { font: 13px/1 "Liberation Sans", sans-serif; letter-spacing: -2.500px; }
.ci-vb { font: 700 10px/12px "Liberation Sans", sans-serif; background: #b2b2b2; color: #222; width: 17px; text-align: center; }
.ci-h { font-size: 19px; }
.ci-h small { font: 11px/1 "DejaVu Sans", sans-serif; }
.ci-w { font-size: 19px; padding-left: 2px; text-decoration: underline; text-decoration-thickness: 1px; text-underline-offset: 1px; }
.ci-b { font: 12px/1 "Liberation Sans", sans-serif; text-decoration: underline; }
.ci-b small { font-size: 8px; }
.ci-j { font: 10px/1 "Noto Sans CJK JP", sans-serif; padding-left: 3px; }
.cv { white-space: nowrap; color: #717171; }
.cv b { font-weight: 400; color: #2f8fec; }
.faint { color: #4c4c4c; }
.car { width: 7px; height: 6px; color: #8e8e8e; }
.stroke-row { height: 25px; display: flex; align-items: center; }
.lines { width: 15px; height: 12px; margin-right: 8px; }
.stroke-row .cv { width: 41px; }
.stroke-drop { width: 105px; height: 16px; background: #1e1e1e; margin-left: 5px; display: flex; align-items: center; justify-content: flex-end; padding-right: 5px; }
.styles { display: flex; align-items: center; height: 26px; padding-left: 18px; font: 17px/1 "Liberation Serif", serif; color: #a8a8a8; }
.st { width: 24px; height: 20px; display: flex; align-items: center; justify-content: center; }
.st-on { background: #181818; color: #2f8fec; }
.st-b { font-weight: 700; width: 22px; margin-right: 1px; }
.st-i { font-style: italic; }
.st-tt { width: 22px; margin: 0 2px 0 4px; font-weight: 700; letter-spacing: -1px; }
.st-sup { margin-left: 3px; }
.st small { font-size: 12px; }
.st sup, .st sub { font-size: 7px; line-height: 0; }

/* timeline */
.timeline { height: 205px; flex: none; margin-top: 1px; background: #232323; border: 1px solid #1d6cb4; border-bottom: 0; border-right: 0; display: flex; flex-direction: column; }
.tl-tabs { height: 26px; flex: none; display: flex; align-items: center; color: #7e7e7e; }
.rq { margin-left: 26px; width: 104px; white-space: nowrap; }
.tl-tab { display: flex; align-items: center; width: 150px; height: 25px; border-bottom: 2px solid #b0b0b0; margin-bottom: 1px; padding-top: 2px; }
.tl-sw { height: 12px; margin: 0 11px 3px 7px; }
.tl-name { white-space: nowrap; }
.tl-tab .ham { margin-left: 13px; }
.tl-body { flex: none; height: 160px; display: flex; }
.tl-left { width: 740px; flex: none; }
.tl-ctrl { height: 34px; display: flex; align-items: center; }
.time { width: 100px; padding-left: 10px; display: flex; flex-direction: column; align-items: flex-start; gap: 3px; }
.tc { font-size: 14px; font-weight: 500; color: #2f8fec; letter-spacing: .5px; margin-left: 4px; }
.fps { font-size: 10.500px; color: #1e5c9c; white-space: nowrap; }
.tl-search { width: 450px; height: 20px; background: #1b1b1b; padding: 3px 0 0 5px; }
.tl-tools { display: flex; align-items: center; margin-left: 14px; color: #a8a8a8; }
.tt { width: 16px; height: 16px; margin-right: 16px; }
.t637 { margin-right: 8px; }
.t661 { margin-right: 9px; }
.t686 { margin-right: 15px; }
.lhead { height: 17px; background: #2a2a2a; border-top: 1px solid #151515; border-bottom: 1px solid #151515; display: grid; grid-template-columns: 64px 34px 28px 123px 212px 66px 19px 70px 1fr; align-items: center; font-size: 9.500px; color: #858585; }
.lhead > span { display: flex; align-items: center; height: 100%; white-space: nowrap; }
.lh-sw { gap: 4px; padding-left: 6px; color: #b0b0b0; }
.e { width: 12px; height: 8px; }
.e10 { width: 9px; height: 11px; }
.e11 { width: 11px; height: 11px; }
.dot { width: 7px; height: 7px; border-radius: 50%; background: #b0b0b0; }
.lh-tag { padding-left: 13px; }
.lh-num { padding-left: 4px; }
.lh-name { padding-left: 4px; }
.lh-ic { gap: 3px; color: #aaa; padding-left: 2px; }
.lh-ic em { font: italic 12px/1 "Liberation Serif", serif; width: 11px; }
.lh-mode { padding-left: 4px; }
.lh-t { padding-left: 10px; }
.lh-trk { padding-left: 4px; }
.lh-par { padding-left: 5px; }
.layer { height: 16px; display: flex; align-items: center; background: #2a2a2a; border-bottom: 1px solid #1e1e1e; color: #a2a2a2; }
.layer u { display: block; text-decoration: none; }
.av { width: 65px; display: flex; height: 15px; padding-left: 5px; position: relative; }
.av u { width: 11px; height: 15px; background: #242424; }
.av u.gap { width: 12px; margin-left: 30px; }
.eye-i { position: absolute; left: 5px; top: 4px; width: 11px; height: 8px; color: #b4b4b4; }
.exp { width: 5px; height: 8px; margin: 0 6px 0 4px; color: #8e8e8e; }
.lab { width: 11px; height: 11px; flex: none; }
.lab-red { background: #c23a3c; }
.lab-lav { background: #b4b0d4; }
.num { width: 34px; padding: 1px 0 0 9px; font-size: 10.500px; }
.lic { width: 15px; height: 13px; display: flex; align-items: center; justify-content: center; flex: none; margin-left: 2px; }
.t-lic { font: 700 14px/1 "Liberation Serif", serif; color: #c0c0c0; }
.null-ic { width: 13px; height: 13px; background: #fff; border: 1px solid #111; }
.solid-ic { width: 13px; height: 13px; background: #ff0038; border: 1px solid #222; }
.file-ic { width: 9px; height: 12px; }
.nm { width: 104px; height: 15px; line-height: 16px; padding-left: 4px; white-space: nowrap; flex: none; font-size: 10.500px; letter-spacing: .2px; }
.nm-sel { background: #a4a4a4; color: #222; }
.nm-mask { display: flex; align-items: center; gap: 6px; padding-left: 1px; }
.mask-i { width: 12px; height: 12px; }
.sws { width: 75px; display: flex; align-items: center; padding-left: 5px; gap: 2px; flex: none; color: #b0b0b0; }
.sws u { width: 12px; height: 15px; background: #242424; }
.s { width: 12px; height: 11px; }
.sun { color: #707070; }
.fx { font: italic 12px/1 "Liberation Serif", serif; width: 14px; margin-left: 2px; color: #a8a8a8; }
.cells { display: flex; gap: 1px; width: 142px; flex: none; }
.cells u { width: 13px; height: 15px; background: #262626; }
.cells-m .s { width: 13px; color: #a0a0a0; }
.dd { display: flex; align-items: center; justify-content: space-between; height: 14px; background: #1d1d1d; padding: 1px 4px 0 7px; white-space: nowrap; flex: none; color: #a4a4a4; }
.mode { width: 64px; }
.layer .tc-cell { width: 12px; height: 15px; background: #262626; margin: 0 5px 0 6px; flex: none; }
.layer .tc-cell.none { background: transparent; }
.trk { width: 60px; }
.trk-empty { width: 60px; flex: none; }
.sp { width: 12px; height: 12px; margin: 0 6px 0 9px; color: #a4a4a4; }
.par { width: 83px; }
.sel { background: #3b3b3b; }
.sel .av u, .sel .sws u, .sel .cells u { background: #353535; }

.tl-right { flex: 1; min-width: 0; position: relative; background: #1e1e1e; overflow: hidden; }
.navbar { position: relative; margin: 5px 23px 0 4px; height: 8px; background: #6a6a6a; }
.cap-l, .cap-r { position: absolute; top: 0; bottom: 0; width: 5px; background: #2f8fec; }
.cap-l { left: 0; border-radius: 3px 0 0 3px; }
.cap-r { right: 0; border-radius: 0 3px 3px 0; }
.nav-cti { position: absolute; left: 128px; top: 0; bottom: 0; width: 4px; background: #6d8fb0; }
.ruler { height: 20px; overflow: hidden; }
.ruler-in { display: flex; margin-left: -36px; }
.rt { width: 84.670px; flex: none; text-align: center; padding-top: 2px; font-size: 10px; color: #9a9a9a; position: relative; height: 19px; }
.rt::after { content: ""; position: absolute; left: 50%; bottom: 0; width: 1px; height: 5px; background: #8a8a8a; }
.workrow { height: 15px; display: flex; position: relative; background: #1e1e1e; }
.workbar { position: relative; margin-left: 3px; width: 347px; height: 14px; background: #666; }
.caprt { position: absolute; left: 524px; top: 0; width: 11px; height: 14px; }
.greenrow { height: 3px; background: #161616; position: relative; }
.g1 { position: absolute; left: 130px; top: 0; width: 7px; height: 2px; background: #29c24a; }
.g2 { position: absolute; left: 182px; top: 0; width: 1px; height: 2px; background: #29c24a; }
.tracks { display: flex; height: 110px; padding-left: 7px; background: #232323; }
.track-col { width: 508px; flex: none; background: #161616; }
.bar { height: 16px; border-bottom: 1px solid #3d1c20; background: linear-gradient(90deg, #7c3a3c 0 339px, #733235 339px); }
.bar-lav { background: #9999bc; border-top: 1px solid #cfcfe4; border-bottom: 1px solid #2a2a2a; }
.tl-scroll { flex: 1; background: #232323; border-left: 6px solid #333; padding: 2px 0 0 3px; }
.pens { width: 14px; height: 12px; }
.thumb { display: block; width: 14px; height: 60px; margin-top: 8px; border-radius: 7px; background: #2d2d2d; }
.cti { position: absolute; left: 132px; top: 19px; bottom: 1px; width: 1px; background: #2f8fec; }
.cti-head { position: absolute; left: -5px; top: 0; width: 11px; height: 11px; background: #2f8fec; clip-path: polygon(0 0, 100% 0, 100% 55%, 50% 100%, 0 55%); }
.tl-foot { height: 17px; flex: none; background: #232323; border-top: 1px solid #111; display: flex; align-items: center; padding-bottom: 1px; }
.foot-l { display: flex; gap: 4px; padding-left: 6px; width: 745px; }
.foot-r { display: flex; align-items: center; }
.sm { width: 10px; height: 7px; }
.zoomknob { width: 9px; height: 9px; border: 1.500px solid #b4b4b4; border-radius: 50%; margin-left: 11px; }
.zoomline { width: 42px; height: 1px; background: #5a5a5a; }
.sl { width: 15px; height: 8px; margin-left: 4px; }
```
